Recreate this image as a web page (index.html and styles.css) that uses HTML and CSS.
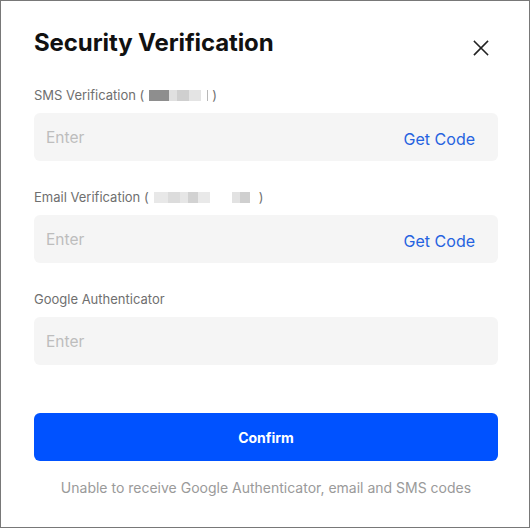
FILE: index.html
```html
<!DOCTYPE html>
<html lang="en">
<head>
<meta charset="utf-8">
<title>Security Verification</title>
<link rel="stylesheet" href="styles.css">
</head>
<body>
<div class="frame">
  <div class="dialog">
    <div class="header">
      <h1 class="title">Security Verification</h1>
      <button class="close" aria-label="Close">
        <svg width="16" height="16" viewBox="0 0 16 16"><path d="M1.5 1.5L14.5 14.5M14.5 1.5L1.5 14.5" stroke="#222" stroke-width="1.6" fill="none" stroke-linecap="square"/></svg>
      </button>
    </div>

    <div class="field">
      <div class="label">SMS Verification (<span class="mask mask-sms"></span>)</div>
      <div class="input">
        <span class="placeholder">Enter</span>
        <span class="getcode">Get Code</span>
      </div>
    </div>

    <div class="field">
      <div class="label">Email Verification (<span class="mask mask-email"></span>)</div>
      <div class="input">
        <span class="placeholder">Enter</span>
        <span class="getcode">Get Code</span>
      </div>
    </div>

    <div class="field">
      <div class="label">Google Authenticator</div>
      <div class="input">
        <span class="placeholder">Enter</span>
      </div>
    </div>

    <button class="confirm">Confirm</button>
    <p class="footer">Unable to receive Google Authenticator, email and SMS codes</p>
  </div>
</div>
</body>
</html>
```

FILE: styles.css
```css
* { box-sizing: border-box; }
html, body { margin: 0; padding: 0; background: #fff; }
body { font-family: Inter, "Noto Sans", Roboto, sans-serif; }

.frame {
  width: 530px;
  height: 528px;
  border: 1px solid #787878;
  background: #fff;
}

.dialog {
  padding: 27px 31px 0 33px;
}

.header {
  display: flex;
  justify-content: space-between;
  align-items: center;
  height: 30px;
}

.title {
  margin: 0;
  font-size: 24px;
  line-height: 30px;
  font-weight: 700;
  color: #111;
  letter-spacing: -0.1px;
}

.close {
  border: 0;
  background: none;
  padding: 0;
  width: 16px;
  height: 16px;
  margin-right: 9px;
  margin-top: 10px;
  display: flex;
}

.field { margin-top: 27px; }
.field + .field { margin-top: 26px; }

.label {
  font-size: 13px;
  line-height: 20px;
  color: #6f6f6f;
  display: flex;
  align-items: center;
  height: 20px;
}

.mask {
  display: inline-block;
  height: 11px;
  margin: 0 1px;
}
.mask-sms {
  width: 66px;
  background: linear-gradient(90deg, #fff 0 4px, #8e8e8e 4px 24px, #e0e0e0 24px 32px, #cfcfcf 32px 44px, #e4e4e4 44px 56px, #fff 56px 62px, #b8b8b8 62px 63px, #fff 63px);
}
.mask-email {
  width: 108px;
  background: linear-gradient(90deg, #fff 0 4px, #e8e8e8 4px 18px, #dcdcdc 18px 30px, #e6e6e6 30px 38px, #d2d2d2 38px 48px, #e9e9e9 48px 60px, #fff 60px 82px, #e2e2e2 82px 90px, #cfcfcf 90px 100px, #fff 100px);
}

.input {
  margin-top: 8px;
  height: 48px;
  background: #f5f5f5;
  border-radius: 6px;
  display: flex;
  align-items: center;
  justify-content: space-between;
  padding: 0 23px 0 12px;
  font-size: 15.5px;
}

.placeholder { color: #bdbdbd; }
.getcode { color: #2563e0; font-size: 16px; padding-top: 3px; }

.confirm {
  display: block;
  width: 100%;
  margin-top: 48px;
  height: 48px;
  border: 0;
  border-radius: 6px;
  background: #0052ff;
  color: #fff;
  font-family: inherit;
  font-size: 14px;
  font-weight: 700;
}

.footer {
  margin: 17px 0 0;
  text-align: center;
  font-size: 14px;
  line-height: 20px;
  color: #9a9a9a;
}
```
